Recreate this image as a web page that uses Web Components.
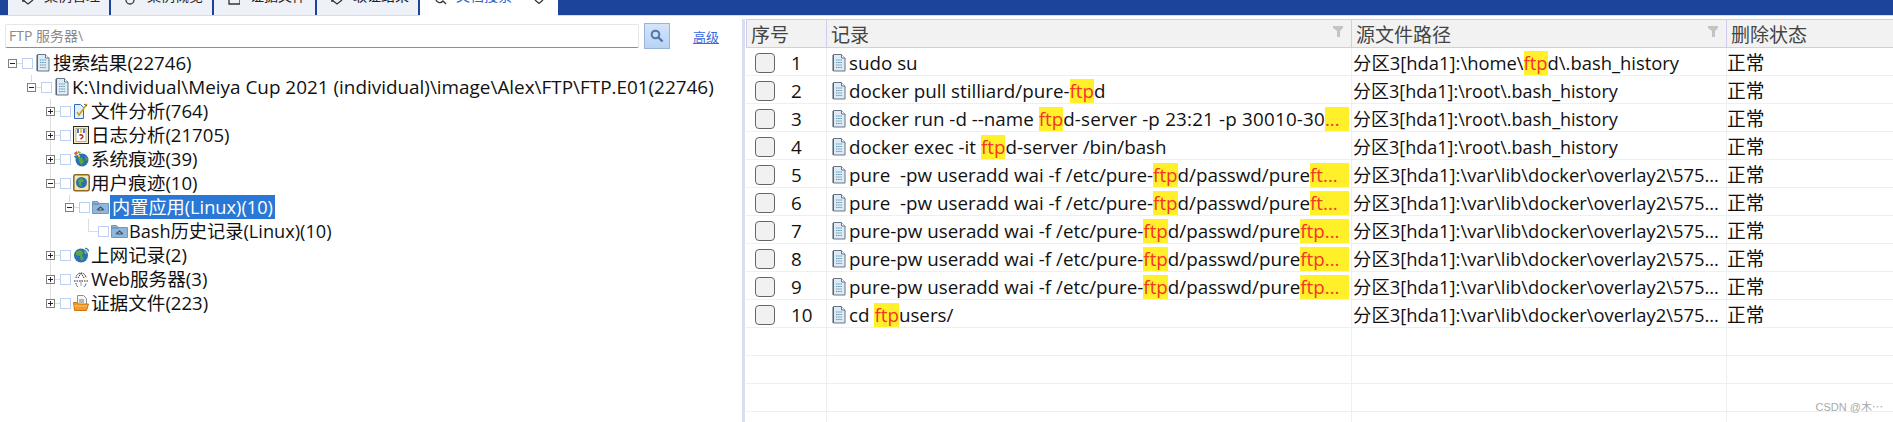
<!DOCTYPE html>
<html lang="zh-CN">

<head>
    <meta charset="UTF-8">
    <title>文档搜索</title>
    <style>
        html, body { margin: 0; height: 422px; overflow: hidden; background: #fff; }
        body { font: 18.8px "Open Sans", "Noto Sans CJK SC", sans-serif; color: #111; }
        .root { font-size: 18px; }
        .long { font-size: 18.4px; }
    </style>
</head>

<body>
    <search-page>
        <tab-bar slot="tabs">
            <tab-item icon="arrow">案例管理</tab-item>
            <tab-item icon="ring">案例概览</tab-item>
            <tab-item icon="square">证据文件</tab-item>
            <tab-item icon="arrow">取证结果</tab-item>
            <tab-item icon="lens" active>文档搜索</tab-item>
        </tab-bar>

        <search-box slot="left" placeholder="FTP 服务器\" link="高级"></search-box>
        <result-tree slot="left">
            <tree-node level="0" state="minus" icon="doc" style="font-size:18.6px">搜索结果(22746)</tree-node>
            <tree-node level="1" state="minus" icon="doc" guides="31:0-7" style="font-size:18.9px">K:\Individual\Meiya Cup 2021 (individual)\image\Alex\FTP\FTP.E01(22746)</tree-node>
            <tree-node level="2" state="plus" icon="page" guides="50:0-24" style="font-size:18.6px">文件分析(764)</tree-node>
            <tree-node level="2" state="plus" icon="log" guides="50:0-24" style="font-size:18.6px">日志分析(21705)</tree-node>
            <tree-node level="2" state="plus" icon="sys" guides="50:0-24" style="font-size:18.6px">系统痕迹(39)</tree-node>
            <tree-node level="2" state="minus" icon="user" guides="50:0-24" style="font-size:18.6px">用户痕迹(10)</tree-node>
            <tree-node level="3" state="minus" icon="folder" guides="50:0-24,69:0-7" style="font-size:18.2px" selected>内置应用(Linux)(10)</tree-node>
            <tree-node level="4" state="elbow" icon="folder" guides="50:0-24" style="font-size:18.2px">Bash历史记录(Linux)(10)</tree-node>
            <tree-node level="2" state="plus" icon="globe" guides="50:0-24" style="font-size:18.6px">上网记录(2)</tree-node>
            <tree-node level="2" state="plus" icon="web" guides="50:0-24" style="font-size:18.6px">Web服务器(3)</tree-node>
            <tree-node level="2" state="plus" icon="evidence" guides="50:0-12" style="font-size:18.6px">证据文件(223)</tree-node>
        </result-tree>

        <record-table slot="right">
            <record-row n="1">sudo su<span slot="path" class="long">分区3[hda1]:\home\<ftp-hit>ftp</ftp-hit>d\.bash_history</span></record-row>
            <record-row n="2">docker pull stilliard/pure-<ftp-hit>ftp</ftp-hit>d<span slot="path" class="root">分区3[hda1]:\root\.bash_history</span></record-row>
            <record-row n="3">docker run -d --name <ftp-hit>ftp</ftp-hit><span style="letter-spacing:.2px">d-server -p 23:21 -p 30010-30</span><ftp-hit fill>...</ftp-hit><span slot="path" class="root">分区3[hda1]:\root\.bash_history</span></record-row>
            <record-row n="4">docker exec -it <ftp-hit>ftp</ftp-hit>d-server /bin/bash<span slot="path" class="root">分区3[hda1]:\root\.bash_history</span></record-row>
            <record-row n="5">pure  -pw useradd wai -f /etc/pure-<ftp-hit>ftp</ftp-hit>d/passwd/pure<ftp-hit fill>ft...</ftp-hit><span slot="path" class="long">分区3[hda1]:\var\lib\docker\overlay2\575...</span></record-row>
            <record-row n="6">pure  -pw useradd wai -f /etc/pure-<ftp-hit>ftp</ftp-hit>d/passwd/pure<ftp-hit fill>ft...</ftp-hit><span slot="path" class="long">分区3[hda1]:\var\lib\docker\overlay2\575...</span></record-row>
            <record-row n="7">pure-pw useradd wai -f /etc/pure-<ftp-hit>ftp</ftp-hit>d/passwd/pure<ftp-hit fill>ftp...</ftp-hit><span slot="path" class="long">分区3[hda1]:\var\lib\docker\overlay2\575...</span></record-row>
            <record-row n="8">pure-pw useradd wai -f /etc/pure-<ftp-hit>ftp</ftp-hit>d/passwd/pure<ftp-hit fill>ftp...</ftp-hit><span slot="path" class="long">分区3[hda1]:\var\lib\docker\overlay2\575...</span></record-row>
            <record-row n="9">pure-pw useradd wai -f /etc/pure-<ftp-hit>ftp</ftp-hit>d/passwd/pure<ftp-hit fill>ftp...</ftp-hit><span slot="path" class="long">分区3[hda1]:\var\lib\docker\overlay2\575...</span></record-row>
            <record-row n="10">cd <ftp-hit>ftp</ftp-hit>users/<span slot="path" class="long">分区3[hda1]:\var\lib\docker\overlay2\575...</span></record-row>
            <record-row></record-row>
            <record-row></record-row>
            <record-row></record-row>
            <record-row></record-row>
        </record-table>
        <water-mark slot="right">CSDN @木⋯</water-mark>
    </search-page>

    <script>
        // all icons in one place, tree and table ask for them by name
        const ICONS = {
            doc: `<svg width="14" height="18" viewBox="0 0 14 18"><path d="M1.5.5h8l3.500 3.500v13h-11.500z" fill="#dfeaf3" stroke="#61778c"/><path d="M9.500.5v3.500h3.500" fill="#fff" stroke="#61778c"/><path d="M4 6h6M4 8.500h6M4 11h6M4 13.500h6" stroke="#5d9bbd" stroke-dasharray="1.500 .7"/><path d="M1 1v16" stroke="#46596b"/></svg>`,
            page: `<svg width="16" height="18" viewBox="0 0 16 18"><path d="M1.500 2.500h6l3 3v11h-9z" fill="#e4eefa" stroke="#2f6cc0"/><path d="M4 10l2 3 8-11" fill="none" stroke="#c9a21c" stroke-width="1.600"/><path d="M11 2l3 2" stroke="#555"/></svg>`,
            log: `<svg width="16" height="18" viewBox="0 0 16 18"><rect x=".5" y=".5" width="15" height="17" fill="#f4ecc9" stroke="#2b2a1c"/><rect x="3" y="2.500" width="10" height="13" fill="#fff" stroke="#8b8464" stroke-width=".6"/><path d="M5 3v4" stroke="#2b4fd0" stroke-width="1.600"/><path d="M8 3v4" stroke="#d8c21c" stroke-width="1.600"/><path d="M11 3v4" stroke="#2b4fd0" stroke-width="1.600"/><path d="M6.500 9.500q1.500-1.500 3 0t-1.500 3v1" fill="none" stroke="#b51e1e" stroke-width="1.300"/></svg>`,
            sys: `<svg width="16" height="18" viewBox="0 0 16 18"><circle cx="9" cy="10" r="6.500" fill="#2a6fb0"/><path d="M5 6l4 2 2 4-3 3-2-4zM12 6l3 3-2 2z" fill="#5da832"/><path d="M1 3l3-2 1 3-3 1z" fill="#e2572b"/><path d="M5 1l3 1-1 2-2-1z" fill="#7cb53a"/><path d="M1 6l3-1 1 2-3 1z" fill="#3576c9"/><path d="M5 5l2 0 0 2-2 0z" fill="#e8b92c"/></svg>`,
            user: `<svg width="17" height="18" viewBox="0 0 17 18"><rect x=".8" y=".8" width="15.400" height="16" rx="1.500" fill="#f3e7b8" stroke="#8c6a1e" stroke-width="1.500"/><circle cx="8.500" cy="8.500" r="5.500" fill="#2a6fb0"/><path d="M5 6l4-2 2 3-3 2 1 4-3-2z" fill="#58a83a"/></svg>`,
            folder: `<svg width="17" height="13" viewBox="0 0 17 13"><path d="M.5 12.500v-12h5l2 2h9v10z" fill="#8fb6dc" stroke="#7098bd"/><path d="M.5 3h7" stroke="#5c7f9f"/><path d="M5 9l3.500-3 3.500 3M6 9h5" fill="none" stroke="#4d5157" stroke-width="1.100"/></svg>`,
            globe: `<svg width="16" height="16" viewBox="0 0 16 16"><circle cx="8" cy="8.500" r="7" fill="#2b6fb8"/><path d="M3 5l4-2 3 2-1 4 2 3-3 2-1-5-4-1z" fill="#5aa83c"/><path d="M11 3l3 3-2 1z" fill="#8bc653"/><path d="M12 1.500a3 3 0 0 1 3.500 3" fill="none" stroke="#2d7fc4" stroke-width="1.300"/></svg>`,
            web: `<svg width="16" height="16" viewBox="0 0 16 16"><path d="M3 7a5 5 0 0 1 10 0M1 10h14M3 12a5 5 0 0 0 10 0M5 7l3-5 3 5" fill="none" stroke="#222" stroke-dasharray="1.500 1"/><path d="M8 9v6" stroke="#999"/></svg>`,
            evidence: `<svg width="16" height="16" viewBox="0 0 16 16"><path d="M4.500.5h6l3 3v6h-9z" fill="#f6f6f6" stroke="#8d8d8d"/><path d="M6 5h5M6 7h5" stroke="#777"/><path d="M.5 7.500h4l1 1.500h10l-2 6.500h-12z" fill="#f39a27" stroke="#cf7414"/><path d="M1 11h13" stroke="#fcc36c"/></svg>`
        };
        const TAB_ICONS = {
            arrow: `<path d="M1 0l5 4 5-4M0 1h3" fill="none" stroke="#333" stroke-width="1.300"/>`,
            ring: `<path d="M1 0a4 4 0 0 0 8 0" fill="none" stroke="#333" stroke-width="1.300"/>`,
            square: `<path d="M1 0v4h11v-4" fill="none" stroke="#333" stroke-width="1.300"/>`,
            lens: `<path d="M1 0a4 4 0 0 0 7 1l3 3" fill="none" stroke="#333" stroke-width="1.300"/>`
        };

        const shadow = (el, html) => {
            el.attachShadow({ mode: "open" }).innerHTML = html;
            return el.shadowRoot;
        };

        customElements.define("search-page", class extends HTMLElement {
            connectedCallback() {
                shadow(this, `<style>
                    :host { display: flex; flex-direction: column; height: 422px; }
                    main { display: flex; flex: 1; min-height: 0; }
                    #left { width: 742px; display: flex; flex-direction: column; }
                    #right { flex: 1; min-width: 0; display: flex; margin-top: 3px; position: relative; overflow: hidden; }
                    #right::before { content: ""; width: 3px; margin-right: 1px; background: #d8dfee; flex: none; }
                </style>
                <slot name="tabs"></slot>
                <main>
                    <div id="left"><slot name="left"></slot></div>
                    <div id="right"><slot name="right"></slot></div>
                </main>`);
            }
        });

        customElements.define("tab-bar", class extends HTMLElement {
            connectedCallback() {
                shadow(this, `<style>
                    :host { display: flex; gap: 2px; height: 16px; padding-left: 8px; box-sizing: border-box;
                            background: linear-gradient(#1c4499 15px, #d3dcec 15px); }
                </style><slot></slot>`);
            }
        });

        customElements.define("tab-item", class extends HTMLElement {
            connectedCallback() {
                const active = this.hasAttribute("active");
                shadow(this, `<style>
                    :host { display: flex; width: 101px; height: 15px; overflow: hidden; background: #eef1f7;
                            padding-left: 14px; box-sizing: border-box; color: #222; font-size: 14px; }
                    :host([active]) { width: 138px; height: 16px; background: #fff; padding-left: 15px; color: #2b5fd0; }
                    svg { flex: none; margin-right: 7px; width: 12px; height: 5px; }
                    span { line-height: 20px; margin: -14px 0 0 3px; white-space: nowrap; }
                    :host([active]) span { margin-left: 2px; }
                    #x { margin-left: 22px; width: 11px; }
                </style>
                <svg viewBox="0 0 12 5">${TAB_ICONS[this.getAttribute("icon")]}</svg>
                <span><slot></slot></span>
                ${active ? `<svg id="x" viewBox="0 0 11 5"><path d="M1 0l4 3.500 4-3.500" fill="none" stroke="#333" stroke-width="1.300"/></svg>` : ""}`);
            }
        });

        customElements.define("search-box", class extends HTMLElement {
            connectedCallback() {
                shadow(this, `<style>
                    :host { display: flex; align-items: center; height: 26px; margin: 7px 0 2px; padding-left: 5px; }
                    #input { width: 634px; height: 24px; box-sizing: border-box; padding-left: 3px; line-height: 22px;
                             font-size: 14px; color: #8a8a8a; background: #fff; border: 1px solid #e6e6e6;
                             border-bottom-color: #8f8f8f; border-radius: 2px; white-space: nowrap; }
                    button { width: 26px; height: 26px; margin-left: 5px; padding: 0; border: 1px solid #9ab5d8;
                             background: linear-gradient(#d4e4fa, #b8d2f5); display: flex; align-items: center; justify-content: center; }
                    a { margin-left: 23px; font-size: 13px; color: #3a6bdc; text-decoration: underline; }
                </style>
                <div id="input">${this.getAttribute("placeholder")}</div>
                <button aria-label="搜索"><svg width="14" height="14" viewBox="0 0 14 14"><circle cx="5.500" cy="5.500" r="3.800" fill="none" stroke="#4f77a7" stroke-width="2"/><path d="M8.500 8.500l4 4" stroke="#4f77a7" stroke-width="2.400"/></svg></button>
                <a href="#">${this.getAttribute("link")}</a>`);
            }
        });

        customElements.define("result-tree", class extends HTMLElement {
            connectedCallback() {
                shadow(this, `<style>:host { display: block; }</style><slot></slot>`);
            }
        });

        customElements.define("app-icon", class extends HTMLElement {
            connectedCallback() {
                shadow(this, `<style>
                    :host { display: inline-flex; align-items: center; justify-content: center; }
                    svg { display: block; }
                </style>${ICONS[this.getAttribute("name")]}`);
            }
        });

        customElements.define("tree-node", class extends HTMLElement {
            connectedCallback() {
                const level = +this.getAttribute("level");
                const state = this.getAttribute("state");
                // guides="x:from-to,..." are the connector lines, in px from the left/top of the row
                const guides = (this.getAttribute("guides") || "").split(",").filter(Boolean).map(g => {
                    const [x, range] = g.split(":");
                    const [from, to] = range.split("-").map(Number);
                    return `linear-gradient(#ddd,#ddd) ${x}px ${from}px / 1px ${to - from}px no-repeat`;
                }).join(",");
                const toggle = state == "elbow"
                    ? `<i id="elbow"></i>`
                    : `<i id="toggle">${state == "plus" ? `<b id="v"></b>` : ""}<b id="h"></b></i><i id="stub"></i>`;
                shadow(this, `<style>
                    :host { display: flex; align-items: center; height: 24px; white-space: nowrap;
                            padding-left: ${8 + 19 * level}px; background: ${guides || "none"}; }
                    i { display: block; flex: none; }
                    #toggle { width: 9px; height: 9px; box-sizing: border-box; border: 1px solid #808080; background: #fff;
                              display: grid; place-items: center; }
                    b { display: block; background: #223; grid-area: 1 / 1; }
                    #h { width: 5px; height: 1px; }
                    #v { width: 1px; height: 5px; }
                    #stub { width: 5px; height: 1px; background: #ddd; }
                    #elbow { width: 10px; height: 13px; margin-left: 4px; align-self: flex-start; border: solid #ddd; border-width: 0 0 1px 1px; box-sizing: border-box; }
                    #check { width: 11px; height: 11px; border: 1px solid #bfd0f5; background: #fff; box-sizing: border-box; flex: none; }
                    app-icon { width: 18px; margin: 0 1px; flex: none; }
                    span { line-height: 24px; height: 24px; }
                    :host([selected]) span { background: #2a78d6; color: #fff; padding: 0 2px; }
                </style>
                ${toggle}
                <i id="check"></i>
                <app-icon name="${this.getAttribute("icon")}"></app-icon>
                <span><slot></slot></span>`);
            }
        });

        const COLUMNS = "80px 525px 375px 1fr";

        customElements.define("record-table", class extends HTMLElement {
            connectedCallback() {
                const funnel = `<svg width="10" height="11" viewBox="0 0 10 11"><path d="M0 0h10v2l-3 3v6h-3v-6l-4-3z" fill="#c4c4c4"/></svg>`;
                shadow(this, `<style>
                    :host { display: block; flex: 1; min-width: 0; }
                    header { display: grid; grid-template-columns: ${COLUMNS}; height: 29px; box-sizing: border-box;
                             background: #f2f2f2; border: solid #ccceea; border-width: 1px 0 1px 1px;
                             font-size: 19px; color: #444; }
                    header div { display: flex; align-items: center; justify-content: space-between;
                                 padding: 0 8px 0 4px; border-right: 1px solid #ccceea; white-space: nowrap; }
                    header div:last-child { border-right: 0; }
                    svg { margin-bottom: 6px; }
                </style>
                <header>
                    <div>序号</div>
                    <div>记录${funnel}</div>
                    <div>源文件路径${funnel}</div>
                    <div>删除状态</div>
                </header>
                <slot></slot>`);
            }
        });

        customElements.define("record-row", class extends HTMLElement {
            connectedCallback() {
                const n = this.getAttribute("n");
                const filled = n !== null;
                shadow(this, `<style>
                    :host { display: grid; grid-template-columns: ${COLUMNS}; height: 28px; box-sizing: border-box;
                            border-bottom: 1px solid #edeff2; padding-left: 1px; white-space: pre; line-height: 24px; }
                    section { display: flex; align-items: flex-start; min-width: 0; overflow: hidden; padding-top: 3px; box-sizing: border-box; border-right: 1px solid #edeff2; }
                    section:last-child { border-right: 0; }
                    #no { padding-left: 8px; }
                    #box { width: 20px; height: 20px; box-sizing: border-box; border: 1px solid #666; border-radius: 4px; background: #f1f1f1; margin: 2px 16px 0 0; flex: none; }
                    #rec { padding: 3px 2px 0 5px; }
                    app-icon { margin: 3px 3px 0 0; flex: none; }
                    #path { display: block; padding-left: 1px; }
                </style>
                <section id="no">${filled ? `<i id="box"></i>${n}` : ""}</section>
                <section id="rec">${filled ? `<app-icon name="doc"></app-icon>` : ""}<slot></slot></section>
                <section id="path"><slot name="path"></slot></section>
                <section>${filled ? "正常" : ""}</section>`);
            }
        });

        customElements.define("ftp-hit", class extends HTMLElement {
            connectedCallback() {
                shadow(this, `<style>
                    :host { display: inline-block; height: 24px; background: #fff02a; color: #f5352a; }
                    :host([fill]) { flex: 1; min-width: 0; }
                </style><slot></slot>`);
            }
        });

        customElements.define("water-mark", class extends HTMLElement {
            connectedCallback() {
                shadow(this, `<style>
                    :host { position: absolute; right: 10px; bottom: 7px; font: 11px/16px "Liberation Sans", "Noto Sans CJK SC", sans-serif; color: #aaa; white-space: nowrap; }
                </style><slot></slot>`);
            }
        });
    </script>
</body>

</html>
